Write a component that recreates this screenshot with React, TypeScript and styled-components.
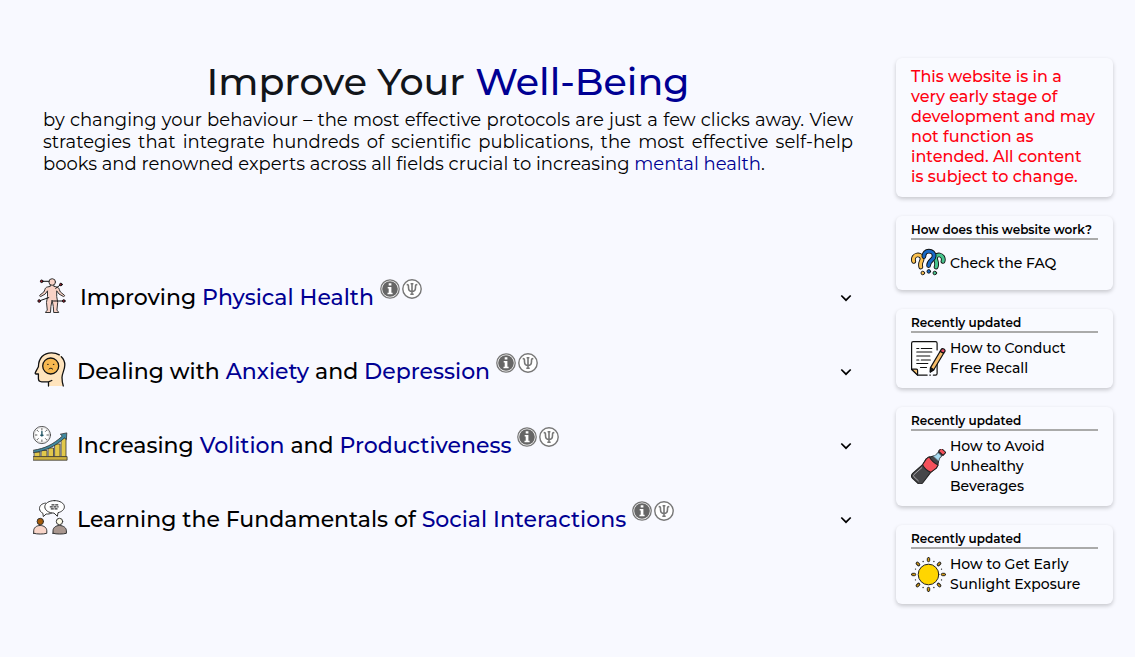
import React from "react";
import styled, { createGlobalStyle } from "styled-components";

const GlobalStyle = createGlobalStyle`
  * { box-sizing: border-box; }
  body {
    margin: 0;
    background: #f8f9ff;
    color: #000;
    font-family: Montserrat, Inter, "Open Sans", sans-serif;
  }
`;

const Page = styled.div`
  display: grid;
  grid-template-columns: minmax(0, 1fr) 217px;
  column-gap: 26px;
  align-items: start;
  padding: 58px 22px 32px 26px;
`;

const Main = styled.main`
  min-width: 0;
`;

const Intro = styled.header`
  padding: 0 17px;
`;

const Title = styled.h1`
  margin: 0 0 4px;
  color: #12151a;
  font-size: 38px;
  font-weight: 500;
  line-height: 47px;
  text-align: center;
`;

const Accent = styled.span`
  color: #000093;
`;

const Lead = styled.p`
  margin: 0;
  font-size: 18px;
  line-height: 22px;
  text-align: justify;
`;

const TextLink = styled.a`
  color: #000093;
  text-decoration: none;
`;

const Topics = styled.div`
  margin-top: 86px;
`;

const TopicRow = styled.section`
  display: flex;
  align-items: center;
  height: 74px;
  padding: 0 18px 0 7px;
`;

const TopicPicture = styled.span`
  margin-bottom: 6px;
`;

const TopicTitle = styled.h2<{ $indent: number }>`
  margin: 0 0 0 ${(p) => p.$indent}px;
  font-size: 22px;
  font-weight: 500;
  line-height: 28px;
`;

const Badges = styled.span`
  display: flex;
  gap: 2px;
  margin: 0 auto 18px 6px;
`;

const IconButton = styled.button`
  display: flex;
  padding: 0;
  border: 0;
  background: none;
  cursor: pointer;
`;

const Sidebar = styled.aside`
  display: flex;
  flex-direction: column;
  gap: 19px;
`;

const Card = styled.section`
  padding: 6px 15px 10px;
  border-radius: 6px;
  background: #f9faff;
  box-shadow: 0 2px 4px rgba(0, 0, 0, 0.2);
`;

const Notice = styled.p`
  margin: 0;
  padding-top: 3px;
  color: #ff0010;
  font-size: 16px;
  font-weight: 500;
  line-height: 20px;
`;

const CardTitle = styled.h3`
  margin: 0 0 5px;
  border-bottom: 2px solid #aaa;
  font-size: 12px;
  font-weight: 600;
  line-height: 16px;
  white-space: nowrap;
`;

const CardLink = styled.a`
  display: flex;
  align-items: center;
  gap: 4px;
  color: #000;
  font-size: 14px;
  font-weight: 500;
  line-height: 20px;
  text-decoration: none;
`;

const Picture = styled.svg`
  display: block;
  flex: none;
  width: 35px;
  height: 35px;
  stroke-linecap: round;
  stroke-linejoin: round;
`;

const BodyIcon = () => (
  <Picture viewBox="0 0 35 35" fill="none" stroke="#333" aria-hidden="true">
    <path
      d="M17.3 7v1.400l-3 .6c-1.600.4-2.100 1.300-2.500 2.800l-1 2.200-4 3.200c-.6.8.4 1.600 1.200 1.200l4.200-2.400 2.300-3.200v5.600l-1 6 .8 8-1.800 1.500v.6h5l.4-6 1.200-6.500 1.200 6.500.4 6h5v-.6l-1.800-1.500.8-8-1-6v-5.600l2.300 3.200 4.200 2.400c.8.4 1.800-.4 1.200-1.200l-4-3.200-1-2.200c-.4-1.500-.9-2.400-2.500-2.800l-3.100-.6V7z"
      fill="#f8d2c6"
    />
    <circle cx="19.200" cy="4" r="3.300" fill="#f8d2c6" />
    <path d="M9 3.300h7M27.500 6.800l-4.800 3.600M6.600 22.800l9.200-3.200M30.300 23H20.500" stroke="#111" />
    <g fill="#a91e32" stroke="#111">
      <circle cx="8.700" cy="3.300" r="1.300" />
      <circle cx="27.900" cy="6.500" r="1.300" />
      <circle cx="6.200" cy="23" r="1.300" />
      <circle cx="30.800" cy="23" r="1.300" />
    </g>
  </Picture>
);

const MindIcon = () => (
  <Picture viewBox="0 0 35 35" fill="none" stroke="#111" strokeWidth="1.300" aria-hidden="true">
    <path
      d="M15.500 34v-4.200H8.800c-2.400 0-3.400-1-3.400-3.200V22H3.200c-1 0-1.300-.8-.8-1.600l3-5.700C5.600 6.200 10.500.8 18.500.8c8 0 13.300 5 13.300 12.300 0 5-2.800 7.900-2.800 12.500 0 3.200.5 6 1.300 8.400"
      fill="#ffe4bd"
      stroke="none"
    />
    <path d="M15.500 34v-4.200H8.800c-2.400 0-3.400-1-3.400-3.200V22H3.200c-1 0-1.300-.8-.8-1.600l3-5.700C5.600 6.200 10.500.8 18.500.8c3 0 5.700.8 7.800 2.100M28.300 4.800c2.200 2.100 3.500 5 3.500 8.300 0 5-2.800 7.900-2.800 12.500 0 3.200.5 6 1.300 8.400M15.500 29.800l3.300-1.300" />
    <circle cx="17.700" cy="14" r="8" fill="#f7b850" />
    <path d="M14.600 12.400h.6M20.300 12.400h.6M16 17c1-1.100 2.600-1.100 3.600 0" strokeWidth="1" />
  </Picture>
);

const GrowthIcon = () => (
  <Picture viewBox="0 0 35 35" fill="none" stroke="#333" strokeWidth=".8" aria-hidden="true">
    <path d="M1.500 26H7v5H1.500zM8.500 24.500H14V31H8.500zM15.500 22h5v9h-5zM22 18h5v13h-5zM28.500 12H33v19h-4.500z" fill="#e2c84b" />
    <path d="M.5 30.600h33.600v3.600H.5z" fill="#cdb13f" />
    <path d="M.6 24.200C12 22.500 20 18.500 29.300 10.100l-2-1.900 6.500-1.300-.4 6.700-1.900-1.700C22.500 20.500 12 25 .6 26.600z" fill="#418aa0" />
    <circle cx="8.900" cy="9" r="8.600" fill="#fff" />
    <circle cx="8.900" cy="9" r="7.400" stroke="#aaa" strokeWidth=".4" />
    <path d="M8.900 2.500v1.500M8.900 14v1.500M2.400 9h1.500M13.900 9h1.500M4.300 4.400l1 1M12.500 12.600l1 1M4.300 13.600l1-1M12.500 5.400l1-1" />
    <path d="M8.900 5.500V10M7.800 9.300h2.200" stroke="#245665" strokeWidth="1.400" />
  </Picture>
);

const TalkIcon = () => (
  <Picture viewBox="0 0 35 35" fill="none" stroke="#333" strokeWidth="1" aria-hidden="true">
    <path d="M12.500 3.100C9 3.500 6.500 5.500 6.500 8.500c0 2 1.300 3.800 3.400 4.800l.4 3.300 2.800-2.600c2 .2 4-.1 5.500-.9" fill="#fff" />
    <path d="M21.500.6c5.500 0 9.900 2.700 9.900 6.200 0 2.700-2.600 5-6.400 5.900l-.6 3.600-3.400-3.200c-5.300-.1-9.200-2.800-9.200-6.300 0-3.500 4.200-6.200 9.700-6.200z" fill="#fff" />
    <path d="M18.500 4.900h7M16.800 6.900h8.800M17.800 8.900h7" strokeWidth="1.200" strokeDasharray="3 .7" strokeLinecap="butt" />
    <path d="M.7 33.300v-2.500c0-3 2.700-5.300 6.500-5.300s6.600 2.300 6.600 5.300v2.500c-3.700 1-9.300 1-13.100 0z" fill="#f8d5c9" />
    <path d="M20 33.300v-2.500c0-3 2.700-5.300 6.500-5.300s6.900 2.300 6.900 5.300v2.500c-3.800 1-9.600 1-13.400 0z" fill="#a9978f" />
    <circle cx="7.300" cy="21.500" r="3.200" fill="#a65b08" />
    <circle cx="26.500" cy="21.500" r="3.200" fill="#fffde9" />
  </Picture>
);

const Question = ({ d, dot, color }: { d: string; dot: [number, number]; color: string }) => (
  <g>
    <path d={d} stroke="#111" strokeWidth="4.800" />
    <path d={d} stroke={color} strokeWidth="3" />
    <circle cx={dot[0]} cy={dot[1]} r="1.800" fill={color} stroke="#111" strokeWidth=".9" />
  </g>
);

const QuestionsIcon = () => (
  <Picture viewBox="0 0 35 35" fill="none" aria-hidden="true">
    <Question d="M2.700 16.400c-1-3.300.6-5.900 3.400-6.400 3-.5 5.300 1.600 4.900 4.400-.3 2.500-2.300 3-1.200 7.600" dot={[11.800, 28]} color="#fbc150" />
    <Question d="M32 16.400c1-3.300-.6-5.900-3.400-6.400-3-.5-4.400 1.600-3.900 4.400.4 2.500 1.800 3.400.4 7.600" dot={[23.800, 28]} color="#48c48d" />
    <Question d="M12.900 11.500c0-3.100 2-5.300 5-5.300s5.200 2.100 5.200 4.800c0 4.200-5.500 4.300-5.500 9.500" dot={[17.800, 26.400]} color="#1768c5" />
  </Picture>
);

const NotesIcon = () => (
  <Picture viewBox="0 0 35 35" fill="none" stroke="#111" strokeWidth="1.200" aria-hidden="true">
    <path d="M26.100 9V2.200c0-1-.6-1.600-1.600-1.600H2.200C1.200.6.6 1.200.6 2.200v26l6 5.900h9.600M18.800 34.100h.6M22.300 34.100h2.200c1 0 1.600-.6 1.600-1.600V21" fill="#fff" />
    <path d="M.6 28.200h4.800c.8 0 1.200.4 1.200 1.200v4.700z" fill="#f6c476" />
    <path d="M5.800 7.500h2M10.300 7.500h10.500M5.800 11h15M5.800 15h13M5.800 19h2M10.300 19h9M5.800 22.500h11M9.500 26.500h6" />
    <path d="M29.200 10.200l3.500 2-9.900 16.500-3.500 2.300.2-4.400z" fill="#f7bd69" />
    <path d="M29.200 10.200l.9-1.600c1.300-2.200 5-.1 3.700 2.100l-1.100 1.500z" fill="#e94b66" />
    <path d="M19.500 26.600l3.300 2.100-3.500 2.300z" fill="#222" />
  </Picture>
);

const BottleIcon = () => (
  <Picture viewBox="0 0 35 35" fill="none" stroke="#222" strokeWidth="1" aria-hidden="true">
    <g transform="rotate(43 17.500 17.500)">
      <path d="M15.100-1h4.800v4.800c.6 3.600 4.400 5.300 4.400 9.600l-1.200 6.300 1.300 13.200c.1 2.800-1.200 4.200-3.400 4.200h-7c-2.200 0-3.500-1.400-3.400-4.200l1.300-13.200-1.200-6.300c0-4.300 3.800-6 4.400-9.600z" fill="#464649" />
      <path d="M15.200 1h4.600v3l1.400 2.600h-7.400L15.200 4z" fill="#a9dcf2" stroke="#6b8793" strokeWidth=".6" />
      <path d="M11.400 9.800c3 1.400 9.200 1.400 12.200 0l.7 3.600-1.200 6.800c-3 1.100-8.200 1.100-11.200 0l-1.200-6.800z" fill="#f4515b" />
      <path d="M14.400-4.600h6.200V-.6h-6.200z" fill="#f4515b" />
      <path d="M13.400 23l-1 10.200c0 1 .5 1.700 1.500 1.700h6" stroke="#b5b4b9" strokeWidth=".8" />
    </g>
  </Picture>
);

const RAYS = [0, 45, 90, 135, 180, 225, 270, 315];

const SunIcon = () => (
  <Picture viewBox="0 0 35 35" fill="#ffd500" stroke="#222" strokeWidth="1" aria-hidden="true">
    <circle cx="17.500" cy="17.500" r="10.300" />
    {RAYS.map((angle) => (
      <g key={angle} transform={`rotate(${angle} 17.500 17.500)`}>
        <rect x="16.300" y=".5" width="2.400" height="4.200" rx="1.200" fill="#d89c13" />
        <circle cx="22.900" cy="4.500" r=".7" fill="#222" stroke="none" />
      </g>
    ))}
  </Picture>
);

const InfoIcon = () => (
  <svg width="20" height="20" viewBox="0 0 20 20" aria-hidden="true">
    <circle cx="10" cy="10" r="9.200" fill="#fff" stroke="#777" strokeWidth="1.300" />
    <circle cx="10" cy="10" r="7.800" fill="#666" />
    <path d="M8.700 4.200h2.700v2.300H8.700zM7.700 8h3.700v5.800h1.200v1.400H7.500v-1.400h1.200V9.400h-1z" fill="#fff" />
  </svg>
);

const PsiIcon = () => (
  <svg width="20" height="20" viewBox="0 0 20 20" fill="none" stroke="#777" aria-hidden="true">
    <circle cx="10" cy="10" r="9.200" fill="#fff" strokeWidth="1.400" />
    <path d="M4.700 5.600c1.800 0 1.800.6 1.800 2.800 0 2.800 1 4 3.500 4s3.500-1.200 3.500-4c0-2.200 0-2.800 1.800-2.800M10 4.800v10.400M8.300 15.300h3.400M8.600 4.800h2.800" strokeWidth="1.600" />
  </svg>
);

const ChevronIcon = () => (
  <svg width="12" height="12" viewBox="0 0 12 12" fill="none" stroke="#000" strokeWidth="1.700" aria-hidden="true">
    <path d="M1.300 3.500L6 8.200l4.700-4.700" />
  </svg>
);

type Topic = { id: string; icon: React.ReactNode; indent: number; title: React.ReactNode };

const TOPICS: Topic[] = [
  { id: "physical", icon: <BodyIcon />, indent: 12, title: <>Improving <TextLink href="#physical">Physical Health</TextLink></> },
  {
    id: "anxiety",
    icon: <MindIcon />,
    indent: 9,
    title: <>Dealing with <TextLink href="#anxiety">Anxiety</TextLink> and <TextLink href="#depression">Depression</TextLink></>,
  },
  {
    id: "volition",
    icon: <GrowthIcon />,
    indent: 9,
    title: <>Increasing <TextLink href="#volition">Volition</TextLink> and <TextLink href="#productiveness">Productiveness</TextLink></>,
  },
  {
    id: "social",
    icon: <TalkIcon />,
    indent: 9,
    title: <>Learning the Fundamentals of <TextLink href="#social">Social Interactions</TextLink></>,
  },
];

const CARDS = [
  { id: "faq", heading: "How does this website work?", text: "Check the FAQ", icon: <QuestionsIcon /> },
  { id: "recall", heading: "Recently updated", text: "How to Conduct Free Recall", icon: <NotesIcon /> },
  { id: "beverages", heading: "Recently updated", text: "How to Avoid Unhealthy Beverages", icon: <BottleIcon /> },
  { id: "sunlight", heading: "Recently updated", text: "How to Get Early Sunlight Exposure", icon: <SunIcon /> },
];

export default function App() {
  return (
    <>
      <GlobalStyle />
      <Page>
        <Main>
          <Intro>
            <Title>
              Improve Your <Accent>Well-Being</Accent>
            </Title>
            <Lead>
              by changing your behaviour – the most effective protocols are just a few clicks away. View
              strategies that integrate hundreds of scientific publications, the most effective self-help books
              and renowned experts across all fields crucial to increasing{" "}
              <TextLink href="#mental-health">mental health</TextLink>.
            </Lead>
          </Intro>
          <Topics>
            {TOPICS.map((topic) => (
              <TopicRow key={topic.id}>
                <TopicPicture>{topic.icon}</TopicPicture>
                <TopicTitle $indent={topic.indent}>{topic.title}</TopicTitle>
                <Badges>
                  <IconButton type="button" aria-label="Information"><InfoIcon /></IconButton>
                  <IconButton type="button" aria-label="Psychology"><PsiIcon /></IconButton>
                </Badges>
                <IconButton type="button" aria-label="Expand" aria-expanded={false}><ChevronIcon /></IconButton>
              </TopicRow>
            ))}
          </Topics>
        </Main>
        <Sidebar>
          <Card>
            <Notice>
              This website is in a very early stage of development and may not function as intended. All content
              is subject to change.
            </Notice>
          </Card>
          {CARDS.map((card) => (
            <Card key={card.id}>
              <CardTitle>{card.heading}</CardTitle>
              <CardLink href={`#${card.id}`}>
                {card.icon}
                <span>{card.text}</span>
              </CardLink>
            </Card>
          ))}
        </Sidebar>
      </Page>
    </>
  );
}
